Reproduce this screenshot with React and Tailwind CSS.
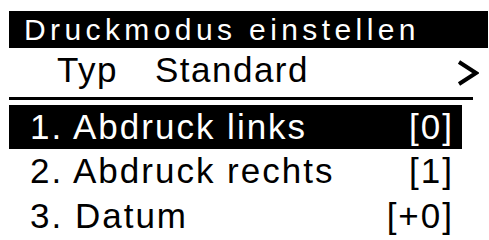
export default function App() {
  const rows = [
    { label: '1. Abdruck links', value: '[0]', active: true },
    { label: '2. Abdruck rechts', value: '[1]' },
    { label: '3. Datum', value: '[+0]' },
  ];

  return (
    <div
      className="w-[489px] h-[240px] bg-white text-black overflow-hidden pt-[11px] pl-[9px]"
      style={{ fontFamily: '"Liberation Sans", Arial, sans-serif' }}
    >
      {/* Title */}
      <div className="w-[479px] h-[37px] bg-black text-white pl-[15px] text-[30px] leading-[37px] tracking-[4.4px] whitespace-nowrap">
        Druckmodus einstellen
      </div>

      {/* Type row */}
      <div className="w-[470px] h-[49px] pt-[2px] flex items-start text-[35px] leading-[40px] tracking-[1.5px] whitespace-nowrap">
        <span className="ml-[48px]">Typ</span>
        <span className="ml-[37px]">Standard</span>
        <svg className="ml-auto mt-[10px]" width="22" height="26" viewBox="0 0 22 26">
          <path d="M2 2 L19 13 L2 24" fill="none" stroke="black" strokeWidth="4" />
        </svg>
      </div>

      {/* Divider */}
      <div className="w-[464px] h-[3px] bg-black" />
      <div className="h-[5px]" />

      {/* Menu */}
      {rows.map((r, i) => (
        <div
          key={i}
          className={`w-[453px] ${i === 0 ? 'h-[44px]' : 'h-[45px]'} flex justify-between pl-[21px] pr-[8px] text-[35px] leading-[44px] tracking-[2px] whitespace-nowrap ${
            r.active ? 'bg-black text-white' : ''
          }`}
        >
          <span>{r.label}</span>
          <span>{r.value}</span>
        </div>
      ))}
    </div>
  );
}
